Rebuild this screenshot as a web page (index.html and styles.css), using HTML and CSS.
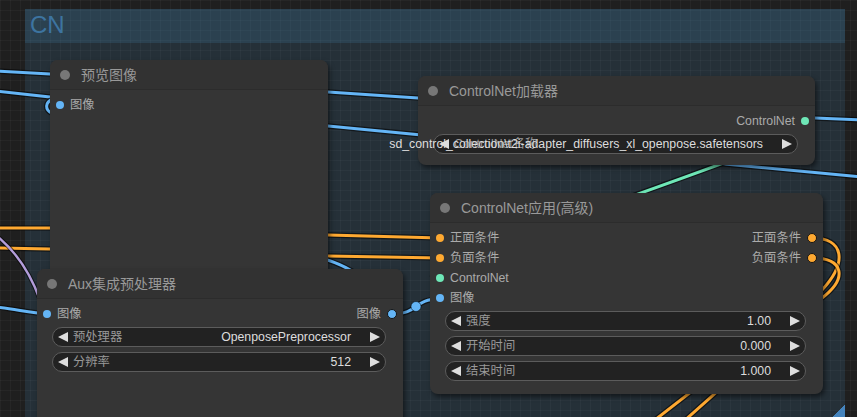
FILE: index.html
```html
<!DOCTYPE html>
<html>
<head>
<meta charset="utf-8">
<link rel="stylesheet" href="styles.css">
</head>
<body>
<div class="canvas">
  <div class="group">
    <div class="group-title">CN</div>
    <div class="group-handle"></div>
  </div>

  <svg class="links" width="857" height="417" viewBox="0 0 857 417">
    <defs>
      <path id="l1" d="M-5,71 L50,74 L328,92 L418,98 L815,118 L862,120"/>
      <path id="l2" d="M-5,91 L50,97 L328,126 L862,177"/>
      <path id="l2b" d="M53,99 C45,102 44,110 53,114"/>
      <path id="l3" d="M-5,228 L50,228 L328,235 L440,238"/>
      <path id="l4" d="M-5,248 L50,249 L328,256 L440,258"/>
      <path id="l5" d="M300,254 Q338,259 362,278"/>
      <path id="l6" d="M-5,307 C15,309 30,313 47,314"/>
      <path id="l7" d="M-3,236 C14,250 30,272 40,300"/>
      <path id="l8" d="M392,314 C420,314 412,299 440,299"/>
      <path id="l9" d="M805,121 C880,121 365,278 440,278"/>
      <path id="l10" d="M812,238 C844,238 848,262 822,290 L642,430"/>
      <path id="l11" d="M812,258 C844,258 848,278 822,298 L674,430"/>
    </defs>
    <use href="#l1" class="edge"/><use href="#l1" class="blue"/>
    <use href="#l2" class="edge"/><use href="#l2" class="blue"/>
    <use href="#l2b" class="edge"/><use href="#l2b" class="blue"/>
    <use href="#l3" class="edge"/><use href="#l3" class="orange"/>
    <use href="#l4" class="edge"/><use href="#l4" class="orange"/>
    <use href="#l5" class="edge"/><use href="#l5" class="blue"/>
    <use href="#l6" class="edge"/><use href="#l6" class="blue"/>
    <use href="#l7" class="edge thin"/><use href="#l7" class="purple"/>
    <use href="#l8" class="edge"/><use href="#l8" class="blue"/>
    <circle cx="416" cy="306.5" r="5" class="mid"/>
    <use href="#l9" class="edge"/><use href="#l9" class="green"/>
    <use href="#l10" class="edge"/><use href="#l10" class="orange"/>
    <use href="#l11" class="edge"/><use href="#l11" class="orange"/>
  </svg>

  <!-- 预览图像 -->
  <div class="node preview">
    <div class="node-title"><span class="title-dot"></span><span>预览图像</span></div>
    <div class="slots">
      <div class="slot-row">
        <div class="slot"><span class="dot blue"></span><span>图像</span></div>
      </div>
    </div>
  </div>

  <!-- Aux集成预处理器 -->
  <div class="node aux">
    <div class="node-title"><span class="title-dot"></span><span>Aux集成预处理器</span></div>
    <div class="slots">
      <div class="slot-row">
        <div class="slot"><span class="dot blue"></span><span>图像</span></div>
        <div class="slot out"><span>图像</span><span class="dot blue linked"></span></div>
      </div>
    </div>
    <div class="widgets">
      <div class="widget">
        <svg class="arr" viewBox="0 0 10 10"><polygon points="10,0 10,10 0,5"/></svg>
        <div class="w-main"><span class="w-label">预处理器</span><span class="w-value">OpenposePreprocessor</span></div>
        <svg class="arr" viewBox="0 0 10 10"><polygon points="0,0 0,10 10,5"/></svg>
      </div>
      <div class="widget">
        <svg class="arr" viewBox="0 0 10 10"><polygon points="10,0 10,10 0,5"/></svg>
        <div class="w-main"><span class="w-label">分辨率</span><span class="w-value">512</span></div>
        <svg class="arr" viewBox="0 0 10 10"><polygon points="0,0 0,10 10,5"/></svg>
      </div>
    </div>
  </div>

  <!-- ControlNet加载器 -->
  <div class="node loader">
    <div class="node-title"><span class="title-dot"></span><span>ControlNet加载器</span></div>
    <div class="slots">
      <div class="slot-row">
        <div class="slot out"><span>ControlNet</span><span class="dot green"></span></div>
      </div>
    </div>
    <div class="widgets">
      <div class="widget">
        <svg class="arr" viewBox="0 0 10 10"><polygon points="10,0 10,10 0,5"/></svg>
        <div class="w-main"><span class="w-label">ControlNet名称</span><span class="w-value">sd_control_collection\t2i-adapter_diffusers_xl_openpose.safetensors</span></div>
        <svg class="arr" viewBox="0 0 10 10"><polygon points="0,0 0,10 10,5"/></svg>
      </div>
    </div>
  </div>

  <!-- ControlNet应用(高级) -->
  <div class="node apply">
    <div class="node-title"><span class="title-dot"></span><span>ControlNet应用(高级)</span></div>
    <div class="slots">
      <div class="slot-row">
        <div class="slot"><span class="dot orange"></span><span>正面条件</span></div>
        <div class="slot out"><span>正面条件</span><span class="dot orange linked"></span></div>
      </div>
      <div class="slot-row">
        <div class="slot"><span class="dot orange"></span><span>负面条件</span></div>
        <div class="slot out"><span>负面条件</span><span class="dot orange linked"></span></div>
      </div>
      <div class="slot-row">
        <div class="slot"><span class="dot green"></span><span>ControlNet</span></div>
      </div>
      <div class="slot-row">
        <div class="slot"><span class="dot blue"></span><span>图像</span></div>
      </div>
    </div>
    <div class="widgets">
      <div class="widget">
        <svg class="arr" viewBox="0 0 10 10"><polygon points="10,0 10,10 0,5"/></svg>
        <div class="w-main"><span class="w-label">强度</span><span class="w-value">1.00</span></div>
        <svg class="arr" viewBox="0 0 10 10"><polygon points="0,0 0,10 10,5"/></svg>
      </div>
      <div class="widget">
        <svg class="arr" viewBox="0 0 10 10"><polygon points="10,0 10,10 0,5"/></svg>
        <div class="w-main"><span class="w-label">开始时间</span><span class="w-value">0.000</span></div>
        <svg class="arr" viewBox="0 0 10 10"><polygon points="0,0 0,10 10,5"/></svg>
      </div>
      <div class="widget">
        <svg class="arr" viewBox="0 0 10 10"><polygon points="10,0 10,10 0,5"/></svg>
        <div class="w-main"><span class="w-label">结束时间</span><span class="w-value">1.000</span></div>
        <svg class="arr" viewBox="0 0 10 10"><polygon points="0,0 0,10 10,5"/></svg>
      </div>
    </div>
  </div>
</div>
</body>
</html>
```

FILE: styles.css
```css
html, body {
  margin: 0;
  padding: 0;
}
body {
  width: 857px;
  height: 417px;
  overflow: hidden;
  background: #1f1f1f;
  font-family: "Liberation Sans", "Noto Sans CJK SC", Arial, sans-serif;
}
.canvas {
  position: relative;
  width: 857px;
  height: 417px;
  overflow: hidden;
  background-color: #1f1f1f;
  background-image:
    linear-gradient(to right, rgba(255,255,255,0.03) 1px, transparent 1px),
    linear-gradient(to bottom, rgba(255,255,255,0.03) 1px, transparent 1px);
  background-size: 10px 10px;
}

/* group */
.group {
  position: absolute;
  left: 25px;
  top: 9px;
  width: 820px;
  height: 408px;
  background: rgba(63, 120, 158, 0.2);
}
.group-title {
  height: 34px;
  background: rgba(63, 120, 158, 0.24);
  color: #3d74a0;
  font-size: 24px;
  line-height: 31px;
  padding-left: 5px;
}
.group-handle {
  position: absolute;
  right: 0;
  bottom: 0;
  width: 12px;
  height: 12px;
  background: linear-gradient(135deg, transparent 50%, #4584bd 50%);
}

/* links */
.links {
  position: absolute;
  left: 0;
  top: 0;
}
.links use {
  fill: none;
  stroke-linecap: round;
  stroke-linejoin: round;
}
.links .edge { stroke: rgba(0,0,0,0.55); stroke-width: 5.5; }
.links .edge.thin { stroke-width: 4.5; }
.links .blue { stroke: #64b5f6; stroke-width: 3; }
.links .orange { stroke: #ffa931; stroke-width: 3; }
.links .green { stroke: #6ee7b7; stroke-width: 3; }
.links .purple { stroke: #b39ddb; stroke-width: 2.4; }
.links .mid { fill: #64b5f6; stroke: rgba(0,0,0,0.5); stroke-width: 1; }

/* nodes */
.node {
  position: absolute;
  box-sizing: border-box;
  background: #353535;
  border-radius: 8px;
  box-shadow: 2px 3px 5px rgba(0,0,0,0.5);
  display: flex;
  flex-direction: column;
}
.preview { left: 50px; top: 60px; width: 278px; height: 420px; }
.aux { left: 37px; top: 269px; width: 366px; height: 200px; }
.loader { left: 418px; top: 76px; width: 397px; height: 89px; }
.apply { left: 430px; top: 193px; width: 393px; height: 201px; }

.node-title {
  flex: none;
  height: 30px;
  box-sizing: border-box;
  display: flex;
  align-items: center;
  gap: 11px;
  padding-left: 10px;
  background: #323232;
  border-radius: 8px 8px 0 0;
  border-bottom: 1px solid #2c2c2c;
  color: #999;
  font-size: 14px;
  line-height: 16px;
  white-space: nowrap;
}
.title-dot {
  width: 10px;
  height: 10px;
  border-radius: 50%;
  background: #777;
  flex: none;
}

.slots {
  padding-top: 5px;
}
.slot-row {
  height: 20px;
  display: flex;
  align-items: center;
  justify-content: space-between;
  padding: 0 6px 0 6px;
  font-size: 12.3px;
  line-height: 14px;
  color: #aaa;
}
.slot {
  display: flex;
  align-items: center;
  gap: 6px;
  white-space: nowrap;
}
.slot.out {
  margin-left: auto;
}
.dot {
  width: 8px;
  height: 8px;
  border-radius: 50%;
  flex: none;
  box-sizing: border-box;
}
.dot.linked {
  width: 10px;
  height: 10px;
  border: 1px solid #151515;
}
.dot.blue { background: #64b5f6; }
.dot.orange { background: #ffa931; }
.dot.green { background: #6ee7b7; }

/* widgets */
.widgets {
  padding-top: 3px;
  display: flex;
  flex-direction: column;
  gap: 5px;
}
.widget {
  height: 20px;
  box-sizing: border-box;
  margin: 0 17px 0 15px;
  border: 1px solid #5c5c5c;
  border-radius: 10px;
  background: #222;
  display: flex;
  align-items: center;
  padding: 0 5px;
  font-size: 12.3px;
  line-height: 14px;
}
.arr {
  width: 10px;
  height: 10px;
  flex: none;
  fill: #ddd;
}
.w-main {
  flex: 1;
  min-width: 0;
  display: grid;
  grid-template-columns: minmax(0, 1fr);
  align-items: center;
  margin: 0 19px 0 5px;
}
.w-label, .w-value {
  grid-area: 1 / 1;
  white-space: nowrap;
  line-height: 14px;
}
.w-label {
  justify-self: start;
  color: #999;
}
.w-value {
  justify-self: unsafe end;
  color: #ddd;
}
```
